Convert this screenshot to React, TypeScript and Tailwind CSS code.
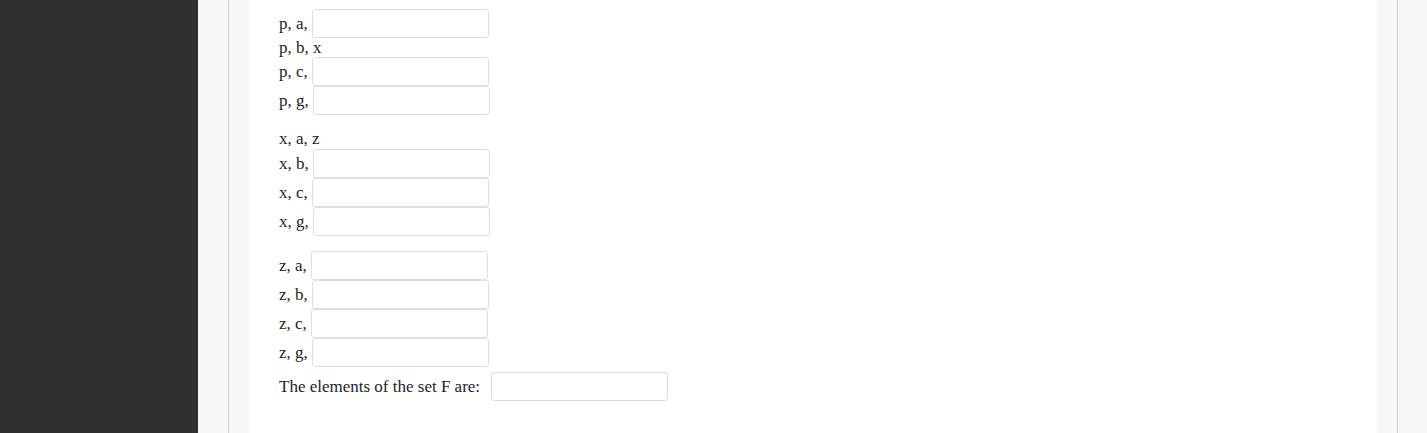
const groups: { label: string; input: boolean }[][] = [
  [
    { label: "p, a,", input: true },
    { label: "p, b, x", input: false },
    { label: "p, c,", input: true },
    { label: "p, g,", input: true },
  ],
  [
    { label: "x, a, z", input: false },
    { label: "x, b,", input: true },
    { label: "x, c,", input: true },
    { label: "x, g,", input: true },
  ],
  [
    { label: "z, a,", input: true },
    { label: "z, b,", input: true },
    { label: "z, c,", input: true },
    { label: "z, g,", input: true },
  ],
]

function Blank() {
  return <input type="text" className="ml-1 h-[29px] w-[177px] rounded-[3px] border border-[#dedede] bg-white outline-none" />
}

export default function App() {
  return (
    <div className="flex h-[433px] overflow-hidden bg-[#f7f7f7] font-['Liberation_Serif',serif] text-[17px] text-[#1e1e1e]">
      <aside className="w-[198px] shrink-0 bg-[#303030]" />
      <main className="ml-[30px] mr-[29px] flex flex-1 border-x border-[#cfcfcf] px-5">
        <div className="flex-1 bg-white px-[30px] pt-[9px]">
          {groups.map((g, i) => (
            <div key={i} className={i === 0 ? "" : i === 1 ? "mt-[14px]" : "mt-[15px]"}>
              {g.map((row, j) => (
                <div
                  key={row.label}
                  className={`flex items-center ${row.input ? "h-[29px]" : i === 0 && j === 1 ? "h-[19px]" : "h-[20px]"}`}
                >
                  <span>{row.label}</span>
                  {row.input && <Blank />}
                </div>
              ))}
            </div>
          ))}
          <div className="mt-[5px] flex h-[29px] items-center">
            <span>The elements of the set F are:</span>
            <input type="text" className="ml-[11px] h-[29px] w-[177px] rounded-[3px] border border-[#dedede] bg-white outline-none" />
          </div>
        </div>
      </main>
    </div>
  )
}
